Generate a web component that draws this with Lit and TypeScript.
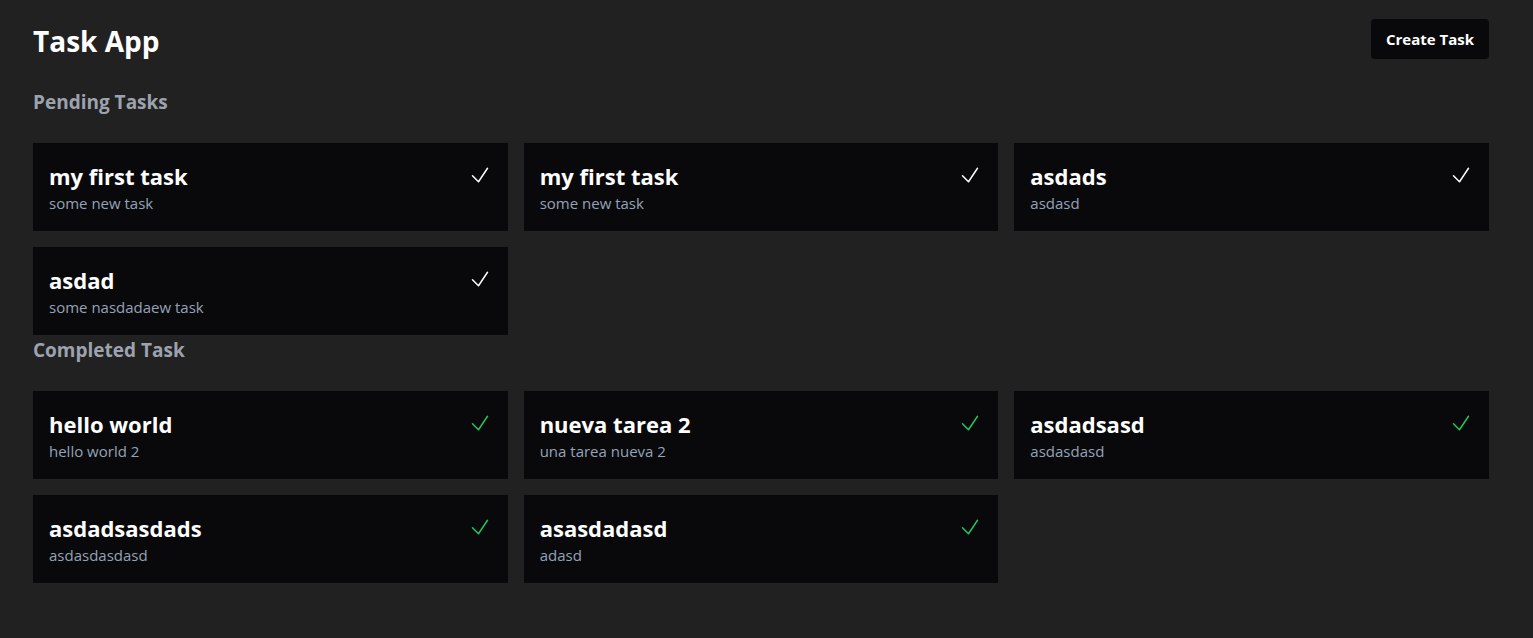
import { LitElement, html, css } from "lit";
import { customElement, property } from "lit/decorators.js";

interface Task {
  title: string;
  description: string;
}

const pending: Task[] = [
  { title: "my first task", description: "some new task" },
  { title: "my first task", description: "some new task" },
  { title: "asdads", description: "asdasd" },
  { title: "asdad", description: "some nasdadaew task" },
];

const completed: Task[] = [
  { title: "hello world", description: "hello world 2" },
  { title: "nueva tarea 2", description: "una tarea nueva 2" },
  { title: "asdadsasd", description: "asdasdasd" },
  { title: "asdadsasdads", description: "asdasdasdasd" },
  { title: "asasdadasd", description: "adasd" },
];

@customElement("task-card")
export class TaskCard extends LitElement {
  @property({ attribute: false }) task!: Task;
  @property({ type: Boolean }) done = false;

  static styles = css`
    :host {
      display: block;
      padding: 16px;
      background: #09090b;
    }
    .top {
      display: flex;
      align-items: flex-start;
      justify-content: space-between;
    }
    .title {
      margin: 0 0 -2px;
      font-size: 22px;
      line-height: 34px;
      font-weight: 700;
      color: #fff;
    }
    .description {
      margin: 0;
      font-size: 15px;
      line-height: 24px;
      color: #94a3b8;
    }
    .toggle {
      display: block;
      padding: 4px 0;
      border: 0;
      background: none;
      color: #fff;
      cursor: pointer;
    }
    .toggle.done {
      color: #22c55e;
    }
    .icon {
      display: block;
      width: 24px;
      height: 24px;
    }
  `;

  render() {
    return html`
      <div class="top">
        <h3 class="title">${this.task.title}</h3>
        <button
          class="toggle ${this.done ? "done" : ""}"
          type="button"
          aria-label="Toggle task"
          aria-pressed=${this.done ? "true" : "false"}
        >
          <svg class="icon" viewBox="0 0 24 24" fill="none" stroke="currentColor" stroke-width="1.5" stroke-linecap="round" stroke-linejoin="round" aria-hidden="true">
            <path d="m4.5 12.75 6 6 9-13.5" />
          </svg>
        </button>
      </div>
      <p class="description">${this.task.description}</p>
    `;
  }
}

@customElement("app-root")
export class AppRoot extends LitElement {
  static styles = css`
    :host {
      display: block;
      box-sizing: border-box;
      min-height: 100vh;
      padding: 19px 44px 32px 33px;
      background: #212121;
      font-family: "Segoe UI", "Open Sans", "Noto Sans", sans-serif;
    }
    .header {
      display: flex;
      align-items: flex-start;
      justify-content: space-between;
      margin-bottom: 24px;
    }
    .heading {
      margin: 0;
      font-size: 28px;
      line-height: 44px;
      font-weight: 700;
      color: #fff;
    }
    .create {
      height: 40px;
      padding: 0 15px;
      border: 0;
      border-radius: 4px;
      background: #09090b;
      color: #fff;
      font-family: inherit;
      font-size: 15px;
      font-weight: 700;
      cursor: pointer;
    }
    .section {
      margin: 0 0 26px;
      font-size: 19px;
      line-height: 30px;
      font-weight: 700;
      color: #9ca3af;
    }
    .grid {
      display: grid;
      grid-template-columns: repeat(3, minmax(0, 1fr));
      gap: 16px;
    }
  `;

  private renderList(heading: string, tasks: Task[], done: boolean) {
    return html`
      <section>
        <h2 class="section">${heading}</h2>
        <div class="grid">
          ${tasks.map((task) => html`<task-card .task=${task} ?done=${done}></task-card>`)}
        </div>
      </section>
    `;
  }

  render() {
    return html`
      <header class="header">
        <h1 class="heading">Task App</h1>
        <button class="create" type="button">Create Task</button>
      </header>
      <main>
        ${this.renderList("Pending Tasks", pending, false)}
        ${this.renderList("Completed Task", completed, true)}
      </main>
    `;
  }
}
